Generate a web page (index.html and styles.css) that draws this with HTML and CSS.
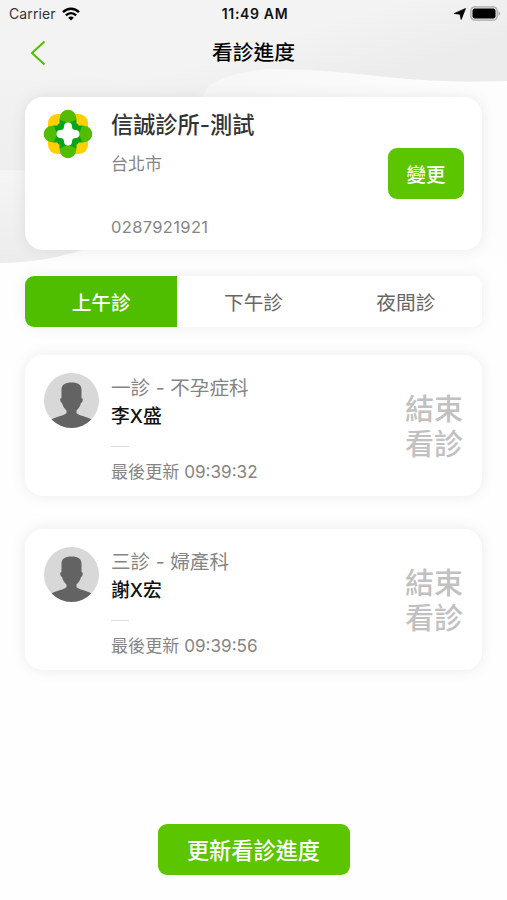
FILE: index.html
```html
<!DOCTYPE html>
<html lang="zh-Hant">
<head>
    <meta charset="UTF-8">
    <meta name="viewport" content="width=device-width, initial-scale=1.0">
    <title>看診進度</title>
    <link rel="stylesheet" href="styles.css">
</head>
<body>
    <svg class="waves" viewBox="0 0 507 290" preserveAspectRatio="none">
        <defs>
            <linearGradient id="topWave" gradientUnits="userSpaceOnUse" x1="330" y1="20" x2="350" y2="85">
                <stop offset="0" stop-color="#f3f3f3"/>
                <stop offset="1" stop-color="#ececec"/>
            </linearGradient>
            <linearGradient id="midWave" gradientUnits="userSpaceOnUse" x1="200" y1="80" x2="460" y2="100">
                <stop offset="0" stop-color="#f6f6f6"/>
                <stop offset="1" stop-color="#fdfdfd"/>
            </linearGradient>
            <linearGradient id="leftWave" gradientUnits="userSpaceOnUse" x1="0" y1="60" x2="0" y2="170">
                <stop offset="0" stop-color="#f3f3f3"/>
                <stop offset="1" stop-color="#eeeeee"/>
            </linearGradient>
            <linearGradient id="lowWave" gradientUnits="userSpaceOnUse" x1="0" y1="170" x2="0" y2="263">
                <stop offset="0" stop-color="#f5f5f5"/>
                <stop offset="1" stop-color="#ececec"/>
            </linearGradient>
            <linearGradient id="fade" gradientUnits="userSpaceOnUse" x1="0" y1="245" x2="0" y2="290">
                <stop offset="0" stop-color="#fdfdfd"/>
                <stop offset="1" stop-color="#fefefe"/>
            </linearGradient>
        </defs>
        <path d="M0 200H507V290H0Z" fill="url(#fade)"/>
        <path d="M0 60H507V200H0Z" fill="url(#midWave)"/>
        <path d="M0 165C90 168 150 200 160 220C120 235 70 263 0 263Z" fill="url(#lowWave)"/>
        <path d="M0 60H230C195 95 190 130 150 190C90 175 50 170 0 170Z" fill="url(#leftWave)"/>
        <path d="M0 0H507V81C400 85 360 69 270 69C225 71 205 87 195 96L0 60Z" fill="url(#topWave)"/>
    </svg>

    <div class="status-bar">
        <div class="carrier">
            <span>Carrier</span>
            <svg width="18" height="14" viewBox="0 0 18 14" fill="none" stroke="#000" stroke-width="2.4">
                <path d="M1 5.2C5.5 .6 12.500 .6 17 5.200"/>
                <path d="M3.900 8.300C6.800 5.400 11.200 5.400 14.100 8.300"/>
                <path d="M9 13.500L6.200 10.700C7.800 9.200 10.200 9.200 11.800 10.700Z" fill="#000" stroke="none"/>
            </svg>
        </div>
        <div class="clock">11:49 AM</div>
        <div class="battery">
            <svg width="12" height="12" viewBox="0 0 12 12"><path d="M11.500 .5L7.200 11.500L6 6.200L.3 5.500Z" fill="#000" stroke="#000" stroke-width=".8" stroke-linejoin="round"/></svg>
            <svg width="31" height="15" viewBox="0 0 31 15">
                <rect x=".8" y=".8" width="26.400" height="13.400" rx="4" fill="#e4e4e4" stroke="#aaa" stroke-width="1.300"/>
                <rect x="2.500" y="2.500" width="23" height="10" rx="2.300" fill="#000"/>
                <path d="M28.500 5.300C30.600 6 30.600 9 28.500 9.700Z" fill="#aaa"/>
            </svg>
        </div>
    </div>

    <div class="nav">
        <svg class="back" width="16" height="26" viewBox="0 0 16 26"><path d="M14.500 1.500L2 13L14.500 24.500" fill="none" stroke="#4fbe00" stroke-width="2"/></svg>
        <h1>看診進度</h1>
    </div>

    <div class="container">
        <div class="card clinic">
            <svg class="logo" width="50" height="50" viewBox="0 0 50 50">
                <rect x="5" y="5" width="40" height="40" rx="9" fill="#ffd000"/>
                <rect x="16.500" y="5" width="17" height="40" rx="6" fill="#08a51a"/>
                <rect x="5" y="16.500" width="40" height="17" rx="6" fill="#08a51a"/>
                <path d="M12 25L15 15L25 12L35 15L38 25L35 35L25 38L15 35Z" fill="#08a51a"/>
                <path d="M16.700 9A8.300 8.300 0 0 1 33.300 9Q33 11 31.500 11.500L25 14L18.500 11.500Q17 11 16.700 9Z" fill="#52bd00"/>
                <path d="M16.700 41A8.300 8.300 0 0 0 33.300 41Q33 39 31.500 38.500L25 36L18.500 38.500Q17 39 16.700 41Z" fill="#52bd00"/>
                <path d="M9 16.700A8.300 8.300 0 0 0 9 33.300Q11 33 11.500 31.500L14 25L11.500 18.500Q11 17 9 16.700Z" fill="#52bd00"/>
                <path d="M41 16.700A8.300 8.300 0 0 1 41 33.300Q39 33 38.500 31.500L36 25L38.500 18.500Q39 17 41 16.700Z" fill="#52bd00"/>
                <path d="M21 17.500A4 4 0 0 1 29 17.500Q29 21 32.500 21A4 4 0 0 1 32.500 29Q29 29 29 32.500A4 4 0 0 1 21 32.500Q21 29 17.500 29A4 4 0 0 1 17.500 21Q21 21 21 17.500Z" fill="#fff"/>
            </svg>
            <div class="clinic-info">
                <h2>信誠診所-測試</h2>
                <p class="city">台北市</p>
                <p class="phone">0287921921</p>
            </div>
            <button class="change-btn">變更</button>
        </div>

        <div class="tabs">
            <button class="tab active">上午診</button>
            <button class="tab">下午診</button>
            <button class="tab">夜間診</button>
        </div>

        <div class="card room">
            <svg class="avatar" width="55" height="55" viewBox="0 0 55 55">
                <circle cx="27.500" cy="27.500" r="27.500" fill="#d8d8d8"/>
                <path d="M17.500 17C17.500 11.500 21 9.500 27.500 9.500S37.500 11.500 37.500 17V25C39.500 25 39 29 37 30C36 34 34 36 32.500 37.500V40C35 43 42 43 47.300 46.500A27.500 27.500 0 0 1 7.700 46.500C13 43 20 43 22.500 40V37.500C21 36 19 34 18 30C16 29 15.500 25 17.500 25Z" fill="#636363"/>
            </svg>
            <div class="room-info">
                <p class="dept">一診 - 不孕症科</p>
                <p class="doctor">李X盛</p>
                <div class="line"></div>
                <p class="updated">最後更新 09:39:32</p>
            </div>
            <div class="state">結束<br>看診</div>
        </div>

        <div class="card room">
            <svg class="avatar" width="55" height="55" viewBox="0 0 55 55">
                <circle cx="27.500" cy="27.500" r="27.500" fill="#d8d8d8"/>
                <path d="M17.500 17C17.500 11.500 21 9.500 27.500 9.500S37.500 11.500 37.500 17V25C39.500 25 39 29 37 30C36 34 34 36 32.500 37.500V40C35 43 42 43 47.300 46.500A27.500 27.500 0 0 1 7.700 46.500C13 43 20 43 22.500 40V37.500C21 36 19 34 18 30C16 29 15.500 25 17.500 25Z" fill="#636363"/>
            </svg>
            <div class="room-info">
                <p class="dept">三診 - 婦產科</p>
                <p class="doctor">謝X宏</p>
                <div class="line"></div>
                <p class="updated">最後更新 09:39:56</p>
            </div>
            <div class="state">結束<br>看診</div>
        </div>
    </div>

    <button class="refresh-btn">更新看診進度</button>
</body>
</html>
```

FILE: styles.css
```css
*{
  box-sizing:border-box;
  margin:0;
  padding:0;
}
body{
  height:900px;
  display:flex;
  flex-direction:column;
  background-color:#fefefe;
  font-family:Inter, "Noto Sans CJK TC", sans-serif;
  color:#333;
  overflow:hidden;
}
svg{
  display:block;
  flex:none;
}
button{
  border:none;
  font-family:inherit;
  padding-bottom:1px;
}
/* grey waves behind the header */
.waves{
  position:absolute;
  top:0;
  left:0;
  width:507px;
  height:290px;
  z-index:-1;
}
.status-bar{
  height:27px;
  padding:0 6px 0 9px;
  display:grid;
  grid-template-columns:1fr auto 1fr;
  align-items:center;
  font-size:14px;
  line-height:27px;
}
.carrier{
  display:flex;
  align-items:center;
  gap:6px;
  letter-spacing:0.1px;
}
.clock{
  font-weight:600;
  letter-spacing:0.65px;
  color:#111;
}
.battery{
  display:flex;
  justify-content:flex-end;
  align-items:center;
  gap:4px;
}
.nav{
  height:51px;
  padding:1px 30px 0;
  display:grid;
  grid-template-columns:1fr auto 1fr;
  align-items:center;
}
.nav h1{
  font-size:20.8px;
  line-height:30px;
  font-weight:500;
  color:#000;
}
.container{
  padding:19px 25px 0;
  flex:1;
}
.card{
  display:flex;
  background-color:white;
  border-radius:18px;
  box-shadow:0 0 15px rgba(0,0,0,0.08);
}
.clinic{
  height:153px;
  padding:12px 18px 0;
}
.clinic-info{
  flex:1;
  padding-left:18px;
}
.clinic h2{
  font-size:22.2px;
  line-height:32px;
  font-weight:500;
}
.city{
  margin-top:10px;
  font-size:17px;
  line-height:26px;
  color:#858585;
}
.phone{
  margin-top:38px;
  font-size:16.5px;
  letter-spacing:0.35px;
  line-height:24px;
  color:#858585;
}
.change-btn{
  width:76px;
  height:51px;
  margin-top:39px;
  border-radius:9px;
  background-color:#5bc500;
  color:white;
  font-size:19.5px;
  font-weight:500;
}
.tabs{
  display:flex;
  height:51px;
  margin:26px 0 28px;
  border-radius:9px;
  overflow:hidden;
  background-color:white;
  box-shadow:0 0 15px rgba(0,0,0,0.07);
}
.tab{
  flex:1;
  background-color:white;
  color:#666;
  font-size:19.7px;
}
.tab.active{
  background-color:#4fbe00;
  color:white;
  font-weight:500;
}
.room{
  height:141px;
  padding:18px 19px 0;
  margin-bottom:33px;
}
.room-info{
  flex:1;
  padding:1px 0 0 12px;
}
.dept{
  font-size:19.6px;
  line-height:28px;
  color:#858585;
}
.doctor{
  font-size:18.8px;
  line-height:29px;
  font-weight:500;
  color:#111;
}
.line{
  width:18px;
  height:1px;
  margin-top:15px;
  background-color:#ddd;
}
.updated{
  margin-top:12px;
  font-size:17.1px;
  line-height:26px;
  color:#858585;
}
.state{
  margin-top:19px;
  font-size:29px;
  line-height:35px;
  color:#c1c1c1;
  font-weight:500;
}
.refresh-btn{
  width:192px;
  height:51px;
  margin:0 auto 25px;
  border-radius:9px;
  background-color:#5bc500;
  color:white;
  font-size:22.2px;
  font-weight:500;
}
```
